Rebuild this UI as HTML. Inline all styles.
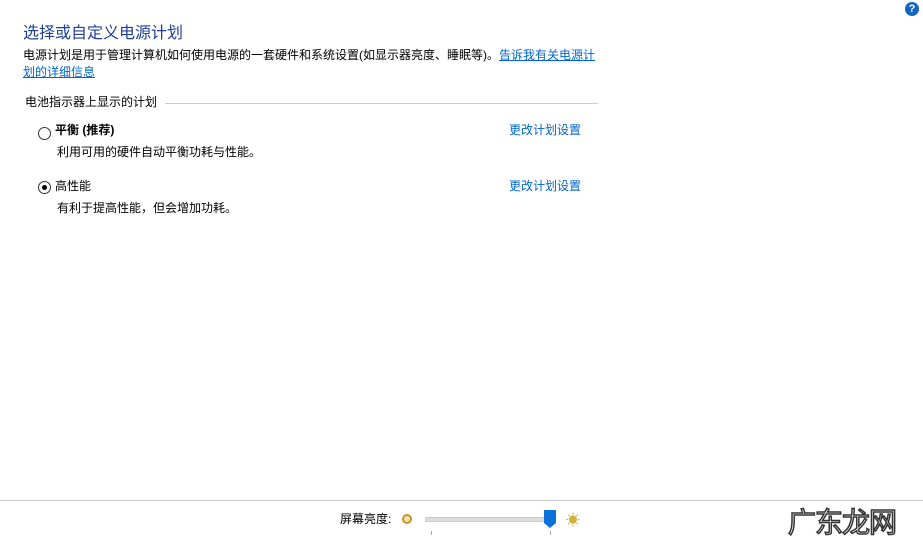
<!DOCTYPE html>
<html><head><meta charset="utf-8"><style>
body{margin:0;width:923px;height:544px;background:#fff;position:relative;overflow:hidden;font-family:"Liberation Sans","Noto Sans CJK SC",sans-serif;font-size:12px;color:#000}
.a{position:absolute;white-space:nowrap}
.link{color:#0066cc}
.u{text-decoration:underline}
</style></head><body>
<div class="a" style="left:905px;top:2px;width:14px;height:14px;border-radius:50%;background:#1565c0;color:#fff;font-size:11px;font-weight:bold;text-align:center;line-height:14px">?</div>
<div class="a" style="left:23px;top:19px;font-size:16px;color:#1e3f9a">选择或自定义电源计划</div>
<div class="a" style="left:23px;top:46px">电源计划是用于管理计算机如何使用电源的一套硬件和系统设置(如显示器亮度、睡眠等)。<span class="link u">告诉我有关电源计</span></div>
<div class="a link u" style="left:23px;top:63px">划的详细信息</div>
<div class="a" style="left:25px;top:93px">电池指示器上显示的计划</div>
<div class="a" style="left:165px;top:103px;width:433px;height:1px;background:#ccc"></div>
<div class="a" style="left:38px;top:127px;width:11px;height:11px;border:1px solid #333;border-radius:50%"></div>
<div class="a" style="left:55px;top:121px;font-weight:bold">平衡 (推荐)</div>
<div class="a" style="left:57px;top:143px">利用可用的硬件自动平衡功耗与性能。</div>
<div class="a link" style="left:509px;top:121px">更改计划设置</div>
<div class="a" style="left:38px;top:181px;width:11px;height:11px;border:1px solid #333;border-radius:50%"></div>
<div class="a" style="left:42px;top:185px;width:5px;height:5px;background:#000;border-radius:50%"></div>
<div class="a" style="left:55px;top:177px">高性能</div>
<div class="a" style="left:57px;top:199px">有利于提高性能，但会增加功耗。</div>
<div class="a link" style="left:509px;top:177px">更改计划设置</div>
<div class="a" style="left:0;top:500px;width:923px;height:1px;background:#ccc"></div>
<div class="a" style="left:340px;top:510px">屏幕亮度:</div>
<div class="a" style="left:402px;top:514px;width:6px;height:6px;border:2px solid #c9962e;border-radius:50%;background:#f6e4a8"></div>
<div class="a" style="left:425px;top:517px;width:120px;height:3px;background:#ddd;border:1px solid #ccc"></div>
<div class="a" style="left:544px;top:510px;width:12px;height:13px;background:#0a72d8"></div>
<div class="a" style="left:547px;top:523px;width:0;height:0;border-left:6px solid transparent;border-right:6px solid transparent;border-top:5px solid #0a72d8;margin-left:-3px"></div>
<div class="a" style="left:566px;top:510px;font-size:14px;color:#d4b23a">☀</div>
<div class="a" style="left:431px;top:531px;width:1px;height:4px;background:#aaa"></div>
<div class="a" style="left:550px;top:531px;width:1px;height:4px;background:#aaa"></div>
<div class="a" style="left:788px;top:501px;font-size:28px;color:#fff;-webkit-text-stroke:1.5px #333;letter-spacing:-1px">广东龙网</div>
</body></html>
